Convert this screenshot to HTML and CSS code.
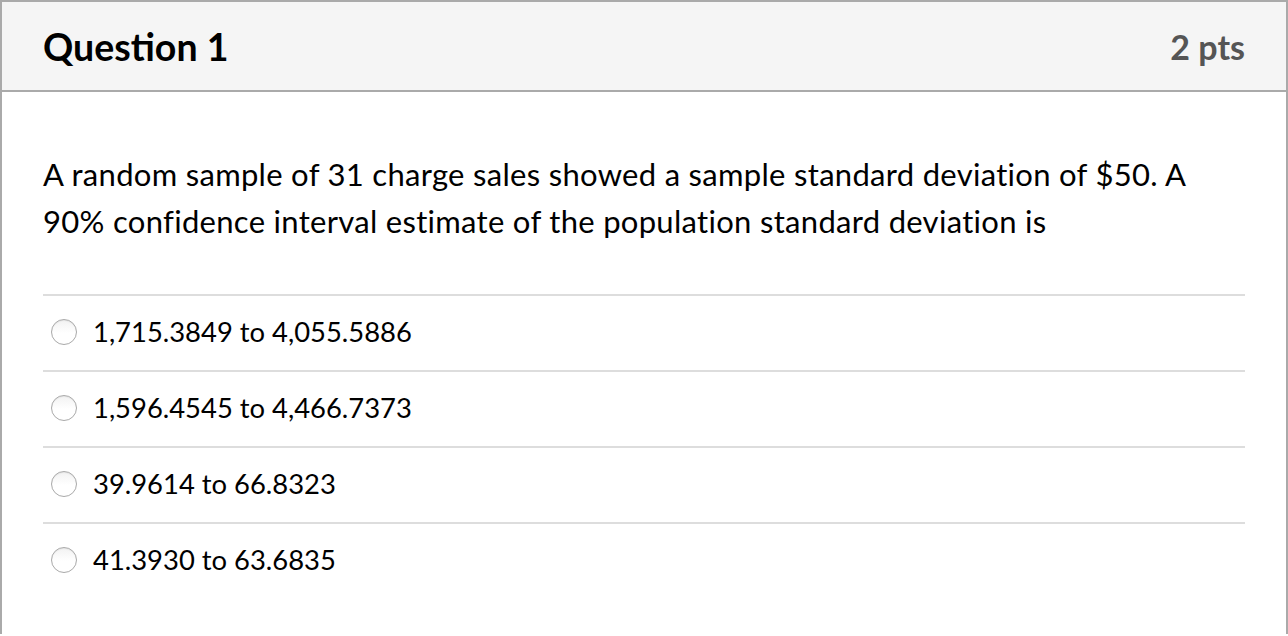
FILE: index.html
```html
<!DOCTYPE html>
<html lang="en">
<head>
<meta charset="utf-8">
<title>Question 1</title>
<link rel="stylesheet" href="styles.css">
</head>
<body>
<div class="question">
  <div class="q-header">
    <h2 class="q-title">Question 1</h2>
    <span class="q-points">2 pts</span>
  </div>
  <div class="q-body">
    <p class="q-text">A random sample of 31 charge sales showed a sample standard deviation of $50. A 90% confidence interval estimate of the population standard deviation is</p>
    <ul class="answers">
      <li class="answer"><span class="radio"></span><span class="answer-label">1,715.3849 to 4,055.5886</span></li>
      <li class="answer"><span class="radio"></span><span class="answer-label">1,596.4545 to 4,466.7373</span></li>
      <li class="answer"><span class="radio"></span><span class="answer-label">39.9614 to 66.8323</span></li>
      <li class="answer"><span class="radio"></span><span class="answer-label">41.3930 to 63.6835</span></li>
    </ul>
  </div>
</div>
</body>
</html>
```

FILE: styles.css
```css
html, body {
  margin: 0;
  padding: 0;
  background: #ffffff;
}
body {
  font-family: Lato, "Open Sans", sans-serif;
  color: #000;
}
.question {
  border: 2px solid #aaaaaa;
  border-bottom: none;
  height: 634px;
  box-sizing: border-box;
  overflow: hidden;
}
.q-header {
  display: flex;
  align-items: center;
  justify-content: space-between;
  height: 88px;
  padding: 0 41px;
  background: #f5f5f5;
  border-bottom: 2px solid #aaaaaa;
}
.q-title {
  margin: 0;
  font-size: 37.5px;
  font-weight: 700;
  color: #000;
}
.q-points {
  font-size: 34px;
  font-weight: 700;
  color: #555555;
}
.q-body {
  padding: 59px 41px 0 41px;
}
.q-text {
  margin: 0;
  font-size: 31px;
  letter-spacing: 0.3px;
  line-height: 47px;
  color: #000;
}
.answers {
  list-style: none;
  margin: 49px 0 0 0;
  padding: 0;
}
.answer {
  display: flex;
  align-items: center;
  height: 71px;
  padding-bottom: 3px;
  border-top: 2px solid #dddddd;
}
.radio {
  width: 26px;
  height: 26px;
  box-sizing: border-box;
  border-radius: 50%;
  border: 1px solid #a9a9a9;
  background: linear-gradient(#f2f2f2, #ffffff 55%);
  box-shadow: inset 0 1px 1px rgba(0,0,0,0.06);
  margin-left: 8px;
  margin-right: 16px;
  flex: none;
}
.answer-label {
  font-size: 27.4px;
  color: #000;
}
```
